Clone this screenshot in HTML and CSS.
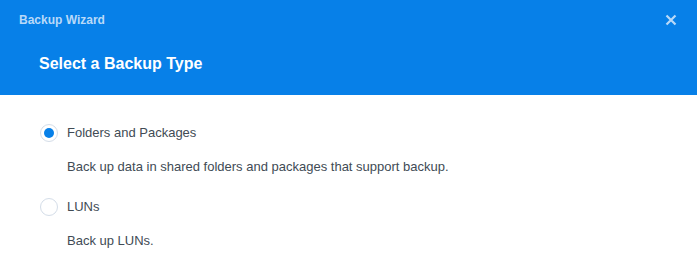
FILE: index.html
```html
<!DOCTYPE html>
<html>
<head>
<meta charset="utf-8">
<link rel="stylesheet" href="styles.css">
</head>
<body>
<div class="dialog">
  <div class="header">
    <div class="titlebar">
      <span class="title">Backup Wizard</span>
      <span class="close" aria-label="close">
        <svg width="12" height="12" viewBox="0 0 12 12"><path d="M1.5 1.5 L10.5 10.5 M10.5 1.5 L1.5 10.5" stroke="#b9d9f8" stroke-width="2.2" stroke-linecap="butt"/></svg>
      </span>
    </div>
    <div class="step">Select a Backup Type</div>
  </div>
  <div class="content">
    <div class="option">
      <div class="row"><span class="radio checked"></span><span class="label">Folders and Packages</span></div>
      <div class="desc">Back up data in shared folders and packages that support backup.</div>
    </div>
    <div class="option">
      <div class="row"><span class="radio"></span><span class="label">LUNs</span></div>
      <div class="desc">Back up LUNs.</div>
    </div>
  </div>
</div>
</body>
</html>
```
FILE: styles.css
```css
html, body { margin: 0; padding: 0; background: #fff; }
body { font-family: "Liberation Sans", Arial, sans-serif; }
.dialog { width: 697px; height: 263px; overflow: hidden; }
.header { background: #0780e8; height: 95px; box-sizing: border-box; padding: 0 19px; }
.titlebar { display: flex; justify-content: space-between; align-items: center; height: 39px; }
.title { color: #b9d9f8; font-size: 12px; font-weight: bold; }
.close { display: flex; margin-right: 1px; }
.step { color: #fff; font-size: 16px; font-weight: bold; padding-left: 20px; line-height: 18px; margin-top: 16px; }
.content { padding: 29px 40px 0; color: #414b55; font-size: 13px; }
.row { display: flex; align-items: center; height: 18px; }
.radio { width: 16px; height: 16px; border: 1px solid #d4dde8; border-radius: 50%; box-sizing: content-box; margin-right: 9px; position: relative; flex: none; }
.radio.checked::after { content: ""; position: absolute; left: 3px; top: 3px; width: 10px; height: 10px; border-radius: 50%; background: #0780e8; }
.label { line-height: 18px; }
.desc { padding-left: 27px; margin-top: 17px; line-height: 16px; margin-bottom: 23px; }
```
